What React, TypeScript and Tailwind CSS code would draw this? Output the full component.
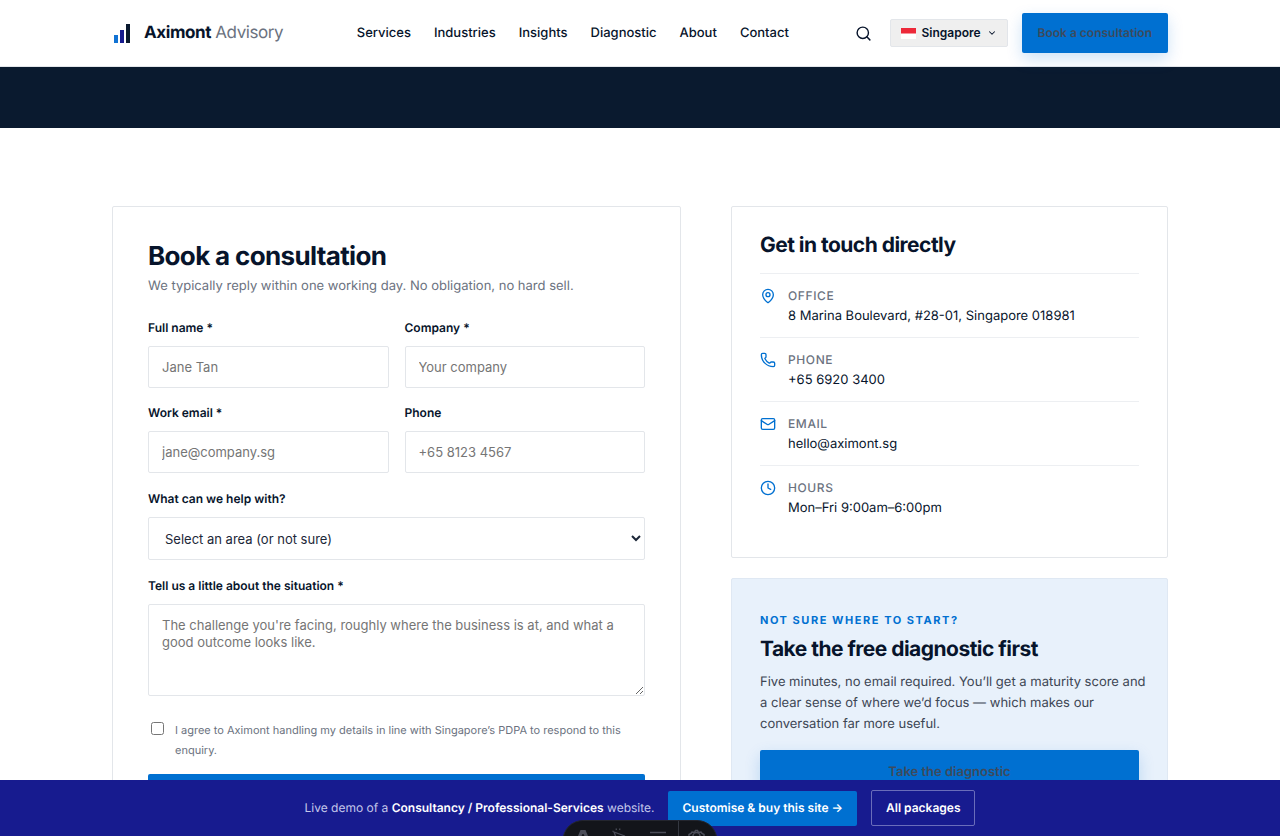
import { ChevronDown, Clock, Mail, MapPin, Phone, Search } from "lucide-react";
import type { ReactNode } from "react";

const navItems = ["Services", "Industries", "Insights", "Diagnostic", "About", "Contact"];

const contacts = [
  { icon: MapPin, label: "Office", value: "8 Marina Boulevard, #28-01, Singapore 018981" },
  { icon: Phone, label: "Phone", value: "+65 6920 3400" },
  { icon: Mail, label: "Email", value: "hello@aximont.sg" },
  { icon: Clock, label: "Hours", value: "Mon–Fri 9:00am–6:00pm" },
];

const control =
  "w-full rounded-xs border border-[#e3e6ea] bg-white text-[13px] text-[#1c2738] placeholder:text-[#757575]";

function Field({ id, label, children }: { id: string; label: string; children: ReactNode }) {
  return (
    <div className="flex flex-col gap-2">
      <label htmlFor={id} className="text-xs leading-5 font-semibold">
        {label}
      </label>
      {children}
    </div>
  );
}

function Header() {
  return (
    <header className="border-b border-[#e3e6ea] bg-white">
      <div className="mx-auto flex h-[66px] max-w-[1056px] items-center justify-between">
        <a href="#home" className="flex items-center gap-3 text-[17px] tracking-tight">
          <svg viewBox="0 0 20 20" className="size-5" aria-hidden="true">
            <rect x="2" y="12" width="4" height="8" fill="#1173d4" />
            <rect x="8" y="7" width="4" height="13" fill="#171b8f" />
            <rect x="14" y="1" width="4" height="19" fill="#0a1a2f" />
          </svg>
          <span className="pt-0.5 text-[#6b7280]">
            <strong className="font-bold text-[#07142b]">Aximont</strong> Advisory
          </span>
        </a>
        <nav className="flex items-center gap-[23px] pt-0.5 pl-2">
          {navItems.map((item) => (
            <a key={item} href="#nav" className="text-[13px] font-medium">
              {item}
            </a>
          ))}
        </nav>
        <div className="flex items-center gap-3.5">
          <button type="button" aria-label="Search" className="mr-1">
            <Search className="size-[17px]" strokeWidth={2} />
          </button>
          <button
            type="button"
            className="flex h-7 items-center gap-1.5 rounded-xs border border-[#e3e6ea] bg-[#efefef] px-2.5 text-xs font-semibold"
          >
            <svg viewBox="0 0 15 11" className="h-[11px] w-[15px]" aria-hidden="true">
              <rect width="15" height="11" fill="#ffffff" />
              <rect width="15" height="5.5" fill="#ed2939" />
            </svg>
            Singapore
            <ChevronDown className="size-2.5" strokeWidth={2.5} />
          </button>
          <a
            href="#book"
            className="flex h-10 items-center rounded-xs bg-[#0070d1] px-4 text-xs font-semibold text-[#3d4a5c] shadow-[0_6px_16px_rgba(0,112,209,0.2)]"
          >
            Book a consultation
          </a>
        </div>
      </div>
    </header>
  );
}

function ConsultationForm() {
  return (
    <form className="rounded-xs border border-[#e3e6ea] bg-white px-[35px] py-9">
      <h1 className="text-[26px] leading-7 font-bold tracking-tight">Book a consultation</h1>
      <p className="mt-[5px] text-[13px] leading-5 text-[#6b7280]">
        We typically reply within one working day. No obligation, no hard sell.
      </p>
      <div className="mt-[22px] grid grid-cols-2 gap-x-4 gap-y-[15px]">
        <Field id="name" label="Full name *">
          <input id="name" placeholder="Jane Tan" className={`${control} h-[42px] px-[13px]`} />
        </Field>
        <Field id="company" label="Company *">
          <input id="company" placeholder="Your company" className={`${control} h-[42px] px-[13px]`} />
        </Field>
        <Field id="email" label="Work email *">
          <input id="email" type="email" placeholder="jane@company.sg" className={`${control} h-[42px] px-[13px]`} />
        </Field>
        <Field id="phone" label="Phone">
          <input id="phone" type="tel" placeholder="+65 8123 4567" className={`${control} h-[42px] px-[13px]`} />
        </Field>
      </div>
      <div className="mt-4 flex flex-col gap-4">
        <Field id="area" label="What can we help with?">
          <select id="area" className={`${control} h-[43px] px-3`}>
            <option>Select an area (or not sure)</option>
          </select>
        </Field>
        <Field id="situation" label="Tell us a little about the situation *">
          <textarea
            id="situation"
            placeholder="The challenge you're facing, roughly where the business is at, and what a good outcome looks like."
            className={`${control} h-[92px] resize-y px-[13px] py-3 leading-[17px]`}
          />
        </Field>
      </div>
      <label className="mt-6 flex items-start gap-[11px] pl-[3px] text-[11px] leading-5 text-[#6b7280]">
        <input type="checkbox" className="mt-0.5 size-[13px] shrink-0" />
        I agree to Aximont handling my details in line with Singapore’s PDPA to respond to this enquiry.
      </label>
      <button
        type="submit"
        aria-label="Request consultation"
        className="mt-3.5 h-11 w-full rounded-xs bg-[#0070d1]"
      />
    </form>
  );
}

function ContactCard() {
  return (
    <section className="rounded-xs border border-[#e3e6ea] bg-white px-7 pt-[25px] pb-7">
      <h2 className="text-[21px] leading-7 font-bold tracking-tight">Get in touch directly</h2>
      <ul className="mt-[13px]">
        {contacts.map(({ icon: Icon, label, value }) => (
          <li key={label} className="flex gap-3 border-t border-[#edeff2] pt-3 pb-[11px]">
            <Icon className="mt-0.5 size-4 shrink-0 text-[#0070d1]" strokeWidth={2} />
            <div className="text-[13px] leading-5">
              <p className="text-xs leading-5 font-medium tracking-wider text-[#6b7280] uppercase">{label}</p>
              <p>{value}</p>
            </div>
          </li>
        ))}
      </ul>
    </section>
  );
}

function DiagnosticCard() {
  return (
    <section className="rounded-xs border border-[#dfe8f3] bg-[#e8f1fb] px-7 pt-[31px] pb-8">
      <p className="text-[11px] leading-5 font-bold tracking-[0.14em] text-[#0070d1] uppercase">
        Not sure where to start?
      </p>
      <h2 className="mt-1.5 text-[21px] leading-7 font-bold tracking-tight">Take the free diagnostic first</h2>
      <p className="mt-2 -mr-3 text-[13px] leading-[21px] text-[#3d4654]">
        Five minutes, no email required. You’ll get a maturity score and a clear sense of where we’d focus — which
        makes our conversation far more useful.
      </p>
      <a
        href="#diagnostic"
        className="mt-[15px] flex h-[46px] items-center justify-center rounded-xs bg-[#0070d1] text-[13px] font-semibold text-[#3d4a5c] shadow-[0_6px_16px_rgba(0,112,209,0.2)]"
      >
        Take the diagnostic
      </a>
    </section>
  );
}

function DemoBar() {
  return (
    <aside className="fixed inset-x-0 bottom-0 flex h-14 items-center justify-center gap-3.5 bg-[#171b8f] text-xs text-[#c5c8ea]">
      <p>
        Live demo of a <strong className="font-semibold text-white">Consultancy / Professional-Services</strong> website.
      </p>
      <a href="#buy" className="flex h-[35px] items-center rounded-xs bg-[#0070d1] px-3.5 font-semibold text-white">
        Customise &amp; buy this site →
      </a>
      <a
        href="#packages"
        className="flex h-9 items-center rounded-xs border border-[#6a6dba] px-3.5 font-semibold text-white"
      >
        All packages
      </a>
    </aside>
  );
}

function DevToolbar() {
  return (
    <div className="pointer-events-none fixed inset-x-0 bottom-0 flex h-4 justify-center overflow-hidden">
      <svg viewBox="0 0 156 16" className="h-4 w-[156px]" fill="none" stroke="#4b4d58" aria-hidden="true">
        <rect x="1" y="0.5" width="154" height="40" rx="20" fill="#13151a" stroke="#24262e" />
        <path d="M116.5 1v15" stroke="#343841" />
        <path d="M16 16l2.500-6h5l2.500 6h-3.500l-1-2h-1l-1 2z" fill="#4b4d58" stroke="none" />
        <path d="M53.500 16l-1.500-4 11 4M54 8.500l.5 1.500M58 8.500l-.5 1.500M50.500 11l1 .5" strokeWidth="1.300" />
        <path d="M88 12.500h16" strokeWidth="1.500" />
        <path d="M127 16v-1.500l2-1 1-1.500 2.500.5 1-2h2l1 2 2.500-.5 1 1.500 2 1V16M131 16a3.500 3.500 0 0 1 7 0" strokeWidth="1.500" />
      </svg>
    </div>
  );
}

export default function App() {
  return (
    <div className="bg-white font-['Inter',sans-serif] text-[#07142b] [text-rendering:geometricPrecision]">
      <Header />
      <div className="h-[61px] bg-[#0a1a2f]" />
      <main className="mx-auto grid max-w-[1056px] grid-cols-[569fr_437fr] items-start gap-[50px] pt-[78px] pb-20">
        <ConsultationForm />
        <div className="flex flex-col gap-5">
          <ContactCard />
          <DiagnosticCard />
        </div>
      </main>
      <DemoBar />
      <DevToolbar />
    </div>
  );
}
